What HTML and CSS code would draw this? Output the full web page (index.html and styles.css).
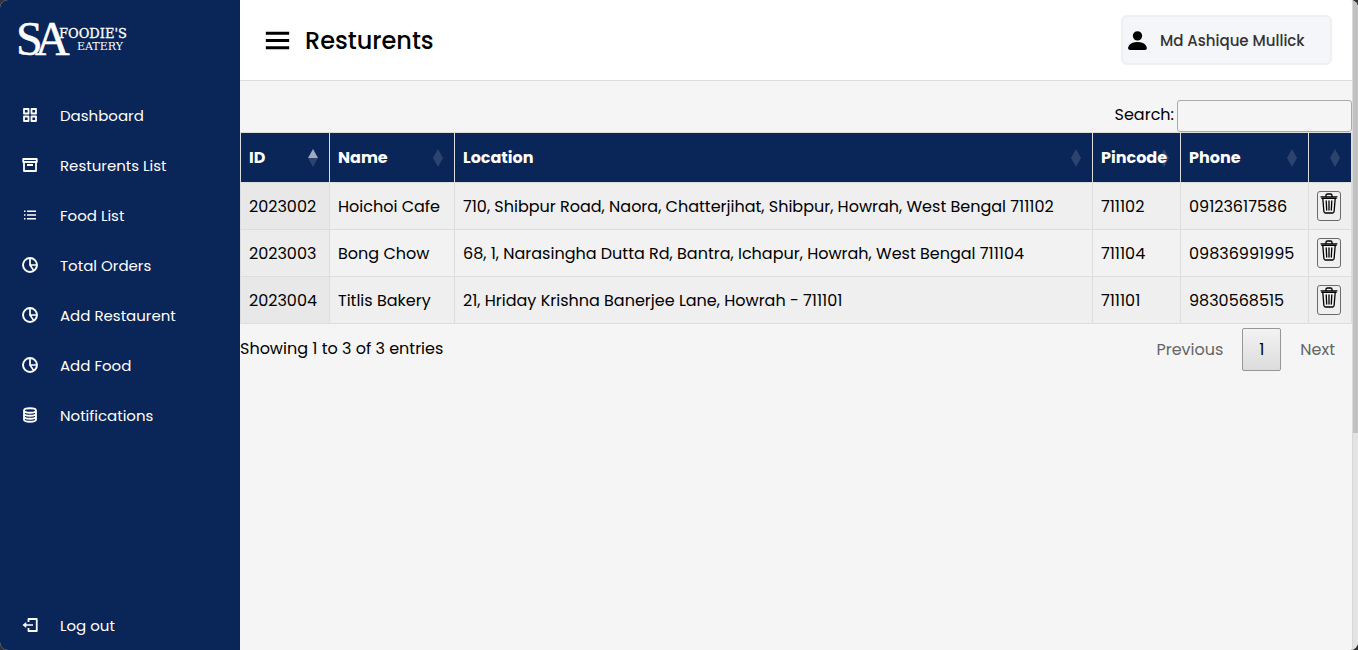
FILE: index.html
```html
<!DOCTYPE html>
<html lang="en">
<head>
<meta charset="utf-8">
<meta name="viewport" content="width=device-width, initial-scale=1">
<title>Resturents</title>
<link rel="stylesheet" href="styles.css">
</head>
<body>
<svg class="sprite" aria-hidden="true">
  <symbol id="i-grid" viewBox="0 0 24 24"><path fill="none" stroke="currentColor" stroke-width="2.400" stroke-linejoin="round" d="M4 4h6v6H4zM14 4h6v6h-6zM4 14h6v6H4zM14 14h6v6h-6z"/></symbol>
  <symbol id="i-box" viewBox="0 0 24 24"><path fill="none" stroke="currentColor" stroke-width="2.400" stroke-linejoin="round" d="M3 4h18v4H3zM4 8v12h16V8M8 12h8"/></symbol>
  <symbol id="i-list" viewBox="0 0 24 24"><path fill="currentColor" d="M4 6h2v2H4zm0 5h2v2H4zm0 5h2v2H4zM8 6h12v2H8zm0 5h12v2H8zm0 5h12v2H8z"/></symbol>
  <symbol id="i-pie" viewBox="0 0 24 24"><circle cx="12" cy="12" r="9.300" fill="none" stroke="currentColor" stroke-width="2.600"/><path fill="none" stroke="currentColor" stroke-width="2.300" d="M12 3v9h9M12 12l5 7.500"/></symbol>
  <symbol id="i-coins" viewBox="0 0 24 24"><path fill="none" stroke="currentColor" stroke-width="2.400" d="M4 6c0-2 3.500-3 8-3s8 1 8 3-3.500 3-8 3-8-1-8-3zM4 6v12c0 2 3.500 3 8 3s8-1 8-3V6M4 10c0 2 3.500 3 8 3s8-1 8-3M4 14c0 2 3.500 3 8 3s8-1 8-3"/></symbol>
  <symbol id="i-logout" viewBox="0 0 24 24"><path fill="currentColor" d="m2 12 5 4v-3h9v-2H7V8z"/><path fill="none" stroke="currentColor" stroke-width="2.400" stroke-linejoin="round" d="M10 8V4h11v16H10v-4"/></symbol>
  <symbol id="i-menu" viewBox="0 0 24 24"><path fill="currentColor" d="M4 6h16v2H4zm0 5h16v2H4zm0 5h16v2H4z"/></symbol>
  <symbol id="i-user" viewBox="0 0 16 16"><path fill="currentColor" d="M3 14s-1 0-1-1 1-4 6-4 6 3 6 4-1 1-1 1zm5-6a3 3 0 1 0 0-6 3 3 0 0 0 0 6"/></symbol>
  <symbol id="i-trash" viewBox="0 0 18 22"><path fill="none" stroke="currentColor" stroke-width="1.300" stroke-linecap="round" stroke-linejoin="round" d="M1 3.800h16M1.800 5.300h14.400M6 3.500V2.300Q6 1 7.500 1h3Q12 1 12 2.300v1.200M2.800 5.500l1.100 13q.2 1.500 1.500 1.500h7.200q1.300 0 1.500-1.500l1.100-13M6.200 8l.5 9M9 8v9M11.800 8l-.5 9"/></symbol>
  <symbol id="i-sort" viewBox="0 0 10 18"><path class="sort-up" d="M5 0l5 9H0z"/><path class="sort-down" d="M5 18l5-9H0z"/></symbol>
</svg>
<div class="app">
  <aside class="sidebar">
    <a class="brand" href="#" aria-label="SA Foodie's Eatery">
      <svg class="logo" viewBox="0 0 120 40">
        <text class="logo-mark" x="-2" y="35">S</text>
        <text class="logo-mark" x="17" y="35">A</text>
        <text class="logo-name" x="41" y="18">FOODIE'S</text>
        <text class="logo-sub" x="59" y="30">EATERY</text>
      </svg>
    </a>
    <nav class="nav">
      <a class="nav-link" href="#"><svg class="nav-icon"><use href="#i-grid"/></svg>Dashboard</a>
      <a class="nav-link" href="#"><svg class="nav-icon"><use href="#i-box"/></svg>Resturents List</a>
      <a class="nav-link" href="#"><svg class="nav-icon"><use href="#i-list"/></svg>Food List</a>
      <a class="nav-link" href="#"><svg class="nav-icon"><use href="#i-pie"/></svg>Total Orders</a>
      <a class="nav-link" href="#"><svg class="nav-icon"><use href="#i-pie"/></svg>Add Restaurent</a>
      <a class="nav-link" href="#"><svg class="nav-icon"><use href="#i-pie"/></svg>Add Food</a>
      <a class="nav-link" href="#"><svg class="nav-icon"><use href="#i-coins"/></svg>Notifications</a>
      <a class="nav-link nav-logout" href="#"><svg class="nav-icon"><use href="#i-logout"/></svg>Log out</a>
    </nav>
  </aside>
  <main class="main">
    <header class="topbar">
      <button class="menu-button" type="button" aria-label="Toggle menu"><svg class="menu-icon"><use href="#i-menu"/></svg></button>
      <h1 class="title">Resturents</h1>
      <div class="profile"><svg class="profile-icon"><use href="#i-user"/></svg><span class="profile-name">Md Ashique Mullick</span></div>
    </header>
    <section class="content">
      <div class="search"><label class="search-label" for="search">Search:</label><input class="search-input" id="search" type="search"></div>
      <table class="table">
        <colgroup><col class="col-id"><col class="col-name"><col><col class="col-pin"><col class="col-phone"><col class="col-action"></colgroup>
        <thead>
          <tr>
            <th class="sorted">ID<svg class="sort"><use href="#i-sort"/></svg></th>
            <th>Name<svg class="sort"><use href="#i-sort"/></svg></th>
            <th>Location<svg class="sort"><use href="#i-sort"/></svg></th>
            <th>Pincode<svg class="sort"><use href="#i-sort"/></svg></th>
            <th>Phone<svg class="sort"><use href="#i-sort"/></svg></th>
            <th aria-label="Actions"><svg class="sort"><use href="#i-sort"/></svg></th>
          </tr>
        </thead>
        <tbody>
          <tr><td>2023002</td><td>Hoichoi Cafe</td><td>710, Shibpur Road, Naora, Chatterjihat, Shibpur, Howrah, West Bengal 711102</td><td>711102</td><td>09123617586</td><td class="action"><button class="delete" type="button" aria-label="Delete"><svg class="trash"><use href="#i-trash"/></svg></button></td></tr>
          <tr><td>2023003</td><td>Bong Chow</td><td>68, 1, Narasingha Dutta Rd, Bantra, Ichapur, Howrah, West Bengal 711104</td><td>711104</td><td>09836991995</td><td class="action"><button class="delete" type="button" aria-label="Delete"><svg class="trash"><use href="#i-trash"/></svg></button></td></tr>
          <tr><td>2023004</td><td>Titlis Bakery</td><td>21, Hriday Krishna Banerjee Lane, Howrah - 711101</td><td>711101</td><td>9830568515</td><td class="action"><button class="delete" type="button" aria-label="Delete"><svg class="trash"><use href="#i-trash"/></svg></button></td></tr>
        </tbody>
      </table>
      <div class="table-footer">
        <p class="info">Showing 1 to 3 of 3 entries</p>
        <div class="pager">
          <button class="page" type="button">Previous</button>
          <button class="page page-current" type="button">1</button>
          <button class="page" type="button">Next</button>
        </div>
      </div>
    </section>
  </main>
  <div class="scroll-track"><div class="scroll-thumb"></div></div>
</div>
</body>
</html>
```
FILE: styles.css
```css
* { box-sizing: border-box; margin: 0; padding: 0; }
body { background: #333; color: #000; font: 16px/24px Poppins, Inter, "Open Sans", sans-serif; }
button, input { font: inherit; color: inherit; }
a { color: inherit; text-decoration: none; }
svg { display: block; flex: none; }
.sprite { position: absolute; width: 0; height: 0; }

.app { display: flex; min-height: 100vh; border-radius: 8px; overflow: hidden; background: #f5f5f5; }

.sidebar { display: flex; flex-direction: column; width: 240px; flex: none; background: #0a2558; color: #fff; }
.brand { display: flex; align-items: center; height: 80px; padding-left: 18px; }
.logo { width: 120px; height: 40px; overflow: visible; fill: #fff; }
.logo-mark { font: 48px "Liberation Serif", serif; stroke: #fff; stroke-width: 0.5px; }
.logo-name { font: 13px "DejaVu Serif", serif; stroke: #fff; stroke-width: 0.3px; }
.logo-sub { font: 11px "DejaVu Serif", serif; }
.nav { display: flex; flex-direction: column; flex: 1; padding-top: 10px; }
.nav-link { display: flex; align-items: center; gap: 21px; height: 50px; padding-top: 1px; padding-left: 21px; font-size: 15px; }
.nav-icon { width: 18px; height: 18px; margin-bottom: 2px; }
.nav-logout { margin-top: auto; }

.main { flex: 1; min-width: 0; }
.topbar { display: flex; align-items: center; height: 81px; padding: 0 20px; background: #fff; border-bottom: 1px solid #ddd; }
.menu-button { margin-right: 10px; border: 0; background: none; }
.menu-icon { width: 35px; height: 35px; }
.title { padding-top: 2px; font-size: 24px; font-weight: 500; line-height: 36px; }
.profile { display: flex; align-items: center; gap: 10px; min-width: 211px; height: 50px; margin-left: auto; padding: 0 2px; border: 2px solid #efeef1; border-radius: 6px; background: #f5f6fa; color: #333; font-size: 15px; font-weight: 500; }
.profile-icon { width: 25px; height: 25px; color: #000; }
.profile-name { padding-top: 2px; }

.content { padding: 19px 0; }
.search { display: flex; align-items: flex-start; justify-content: flex-end; gap: 3px; }
.search-label { line-height: 30px; }
.search-input { width: 175px; height: 32px; padding: 4px; border: 1px solid #aaa; border-radius: 3px; background: transparent; }

.table { width: 100%; table-layout: fixed; border-collapse: collapse; }
.col-id { width: 89px; }
.col-name { width: 125px; }
.col-pin { width: 88px; }
.col-phone { width: 128px; }
.col-action { width: 43px; }
.table th { position: relative; z-index: 0; height: 50px; padding: 0 8px; border: 1px solid #ddd; border-bottom: 0; background: #0a2558; color: #fff; font-weight: 700; text-align: left; }
.table td { height: 47px; padding: 2px 8px 0; border: 1px solid #ddd; white-space: nowrap; }
.table .action { padding-top: 0; }
.table tbody tr { background: #f2f2f2; }
.table tbody tr:nth-child(odd) { background: #efefef; }
.table td:first-child { background: #ececec; }
.table tr:nth-child(odd) td:first-child { background: #e8e8e8; }
.sort { position: absolute; z-index: -1; top: 16px; right: 11px; width: 10px; height: 18px; fill: #2c4370; }
.sorted .sort { --up: #a0a9be; }
.sort-up { fill: var(--up, #2c4370); }
.delete { display: flex; align-items: flex-start; width: 24px; height: 30px; padding: 1px 2px; border: 1px solid #6b6b6b; border-radius: 3px; background: #efefef; }
.trash { width: 18px; height: 22px; }

.table-footer { display: flex; justify-content: space-between; align-items: flex-start; padding-top: 4px; }
.info { padding-top: 9px; }
.pager { display: flex; gap: 2px; }
.page { min-width: 39px; height: 43px; padding: 0 16px; border: 1px solid transparent; border-radius: 2px; background: transparent; color: #666; }
.page-current { padding: 0; border-color: #979797; background: linear-gradient(#f3f3f3, #dcdcdc); color: #000; }

.scroll-track { width: 6px; flex: none; background: #e3e3e3; border-left: 1px solid #d8d8d8; }
.scroll-thumb { height: 66.6vh; background: #c1c1c1; }
```
